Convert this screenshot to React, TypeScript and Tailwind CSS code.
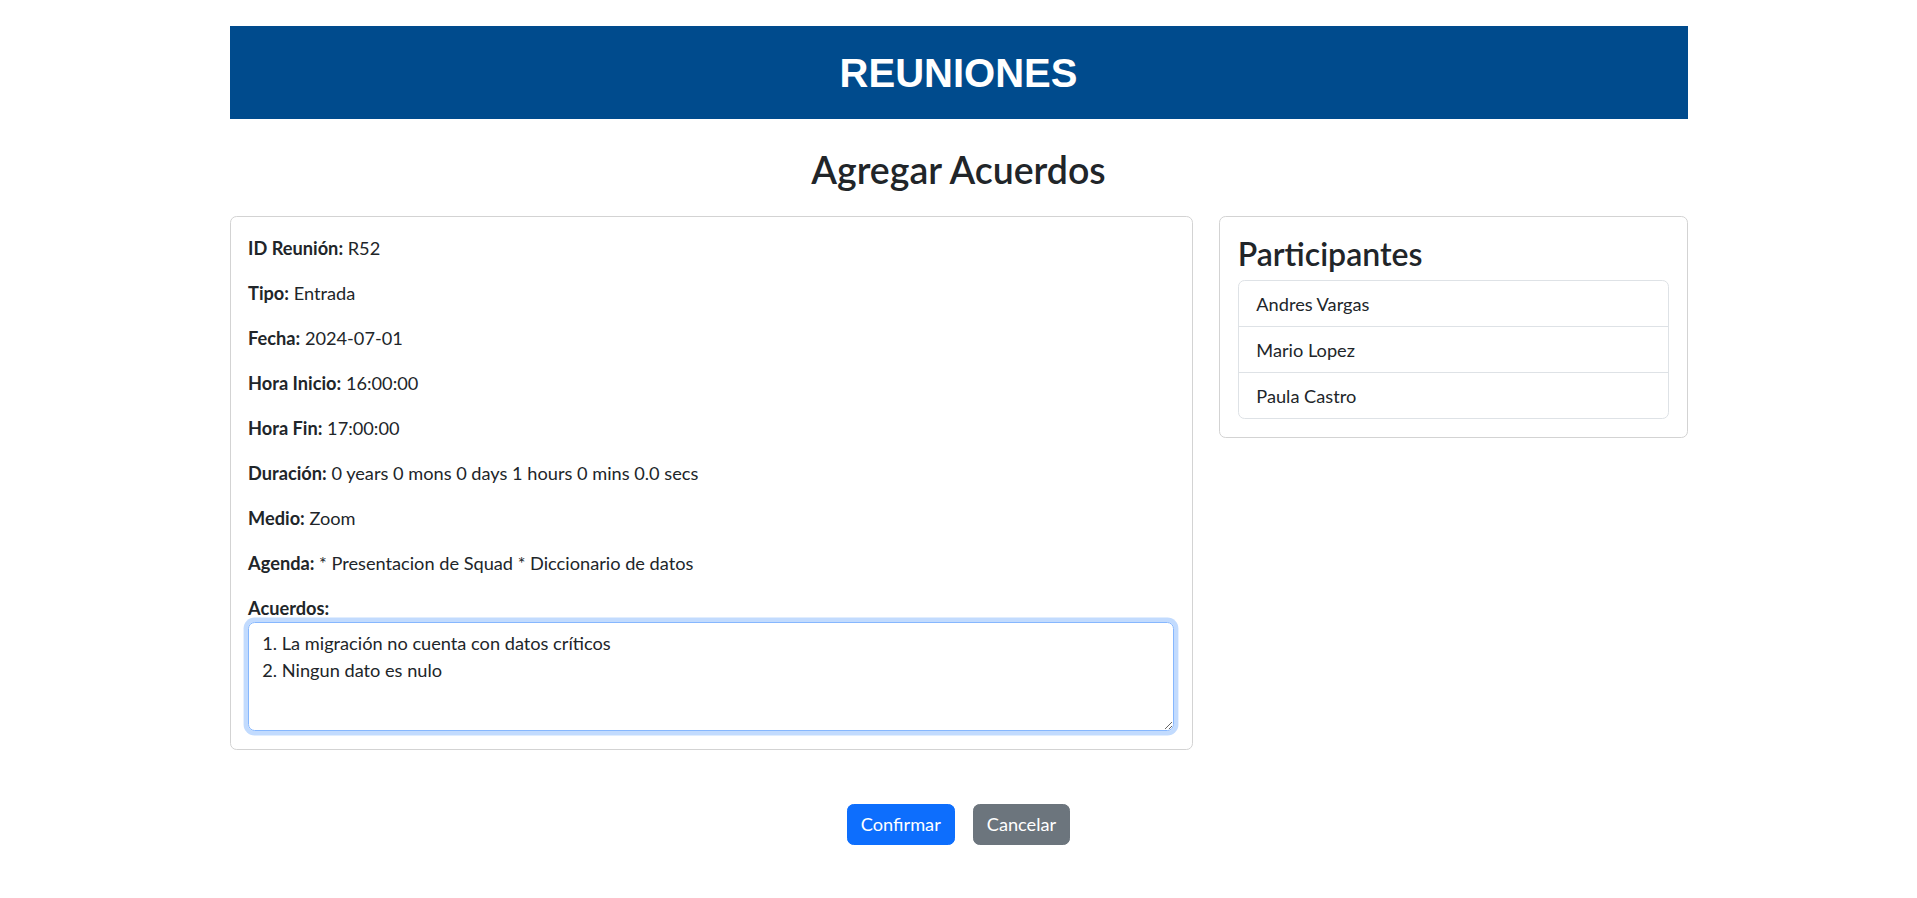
import { useState } from 'react'

const detalles = [
  { label: 'ID Reunión:', value: 'R52' },
  { label: 'Tipo:', value: 'Entrada' },
  { label: 'Fecha:', value: '2024-07-01' },
  { label: 'Hora Inicio:', value: '16:00:00' },
  { label: 'Hora Fin:', value: '17:00:00' },
  { label: 'Duración:', value: '0 years 0 mons 0 days 1 hours 0 mins 0.0 secs' },
  { label: 'Medio:', value: 'Zoom' },
  { label: 'Agenda:', value: '* Presentacion de Squad * Diccionario de datos' },
]

const participantes = ['Andres Vargas', 'Mario Lopez', 'Paula Castro']

export default function App() {
  const [acuerdos, setAcuerdos] = useState('1. La migración no cuenta con datos críticos\n2. Ningun dato es nulo')

  return (
    <div className="min-h-screen bg-white text-[#212529] font-['Lato','Noto_Sans',sans-serif] text-[18.2px] leading-[26.4px]">
      <div className="w-[1458px] mx-auto pt-[26px]">
        {/* Encabezado */}
        <header className="h-[93px] bg-[#004b8d] flex items-center justify-center">
          <h1 className="text-white font-bold text-[40px] leading-none font-['Liberation_Sans',Arial,sans-serif]">REUNIONES</h1>
        </header>

        <h2 className="text-center text-[37.5px] leading-[42px] font-semibold mt-[30px] mb-[25px]">Agregar Acuerdos</h2>

        <div className="grid grid-cols-3 gap-[26.4px] items-start">
          {/* Datos de la reunión */}
          <div className="col-span-2 border border-[#d3d3d3] rounded-[6.6px] p-[17.6px]">
            {detalles.map((d) => (
              <p key={d.label} className="mb-[18.6px]">
                <strong className="font-bold">{d.label}</strong> {d.value}
              </p>
            ))}
            <label className="block font-bold mb-px">Acuerdos:</label>
            <textarea
              value={acuerdos}
              onChange={(e) => setAcuerdos(e.target.value)}
              className="block w-full h-[109px] border border-[#86b7fe] rounded-[6.6px] px-[13.2px] py-[6.6px] outline-none shadow-[0_0_0_4.4px_rgba(13,110,253,0.25)] text-[#212529] text-[18.2px] leading-[27px]"
            />
          </div>

          {/* Participantes */}
          <div className="border border-[#d3d3d3] rounded-[6.6px] p-[17.6px]">
            <h3 className="text-[32px] leading-[37px] font-semibold mb-[8.8px]">Participantes</h3>
            <ul className="border border-[#dee2e6] rounded-[6.6px]">
              {participantes.map((p, i) => (
                <li
                  key={p}
                  className={`px-[17.6px] py-[9.3px] ${i > 0 ? 'border-t border-[#dee2e6]' : ''}`}
                >
                  {p}
                </li>
              ))}
            </ul>
          </div>
        </div>

        <div className="flex justify-center gap-[17.6px] mt-[54px]">
          <button className="bg-[#0d6efd] text-white rounded-[6.6px] border border-[#0d6efd] px-[13.2px] py-[6.6px]">Confirmar</button>
          <button className="bg-[#6c757d] text-white rounded-[6.6px] border border-[#6c757d] px-[13.2px] py-[6.6px]">Cancelar</button>
        </div>
      </div>
    </div>
  )
}
